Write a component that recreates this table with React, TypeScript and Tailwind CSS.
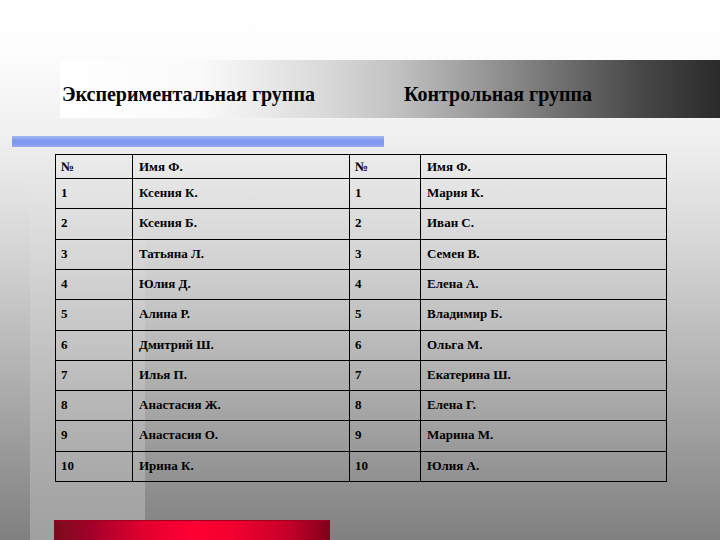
import React from "react";

const exp = ["Ксения К.", "Ксения Б.", "Татьяна Л.", "Юлия Д.", "Алина Р.", "Дмитрий Ш.", "Илья П.", "Анастасия Ж.", "Анастасия О.", "Ирина К."];
const ctl = ["Мария К.", "Иван С.", "Семен В.", "Елена А.", "Владимир Б.", "Ольга М.", "Екатерина Ш.", "Елена Г.", "Марина М.", "Юлия А."];

const cell = "border border-black align-top pl-[5px] leading-[15px] font-['Liberation_Serif','DejaVu_Serif',serif]";

export default function App() {
  return (
    <div
      className="w-[720px] h-[540px] overflow-hidden flex flex-col font-['Liberation_Serif','DejaVu_Serif',serif] [background:linear-gradient(to_bottom,rgba(255,255,255,0)_0,rgba(255,255,255,0.12)_40%,rgba(255,255,255,0.25)_100%)_30px_150px/115px_390px_no-repeat,linear-gradient(to_bottom,#ffffff_0,#fdfdfd_50px,#efefef_140px,#d5d5d5_250px,#b8b8b8_350px,#9a9a9a_450px,#808080_540px)]"
    >
      <div className="mt-[60px] ml-[60px] h-[60px] flex items-center pt-[9px] font-bold text-[20px] text-black bg-[linear-gradient(to_right,#ffffff_0,#fafafa_140px,#d8d8d8_270px,#c0c0c0_340px,#999999_420px,#707070_500px,#484848_580px,#2a2a2a_660px)]">
        <span className="ml-[2px] w-[342px]">Экспериментальная группа</span>
        <span>Контрольная группа</span>
      </div>
      <div className="mt-[18px] ml-[12px] w-[372px] h-[11px] bg-[linear-gradient(to_bottom,#a8b7f5_0,#8199ef_40%,#8199ef_70%,#97aaf2_100%)]" />
      <table className="mt-[7px] ml-[55px] w-[611px] border-collapse table-fixed text-[13px] font-bold text-black">
        <colgroup>
          <col className="w-[77px]" />
          <col className="w-[217px]" />
          <col className="w-[71px]" />
          <col className="w-[246px]" />
        </colgroup>
        <tbody>
          <tr className="h-[24px]">
            <td className={cell + " pt-[4px]"}>№</td>
            <td className={cell + " pt-[4px] pl-[6px]"}>Имя Ф.</td>
            <td className={cell + " pt-[4px]"}>№</td>
            <td className={cell + " pt-[4px] pl-[6px]"}>Имя Ф.</td>
          </tr>
          {exp.map((n, i) => (
            <tr key={i} className="h-[30.3px]">
              <td className={cell + " pt-[6px]"}>{i + 1}</td>
              <td className={cell + " pt-[6px] pl-[6px]"}>{n}</td>
              <td className={cell + " pt-[6px]"}>{i + 1}</td>
              <td className={cell + " pt-[6px] pl-[6px]"}>{ctl[i]}</td>
            </tr>
          ))}
        </tbody>
      </table>
      <div className="mt-[38px] ml-[54px] w-[276px] h-[20px] shrink-0 border-t border-[#a0001e] bg-[linear-gradient(to_right,#7a0a1e_0,#a8002a_15%,#e0002e_32%,#ff0033_50%,#f2002f_65%,#c40028_85%,#80001a_100%)]" />
    </div>
  );
}
